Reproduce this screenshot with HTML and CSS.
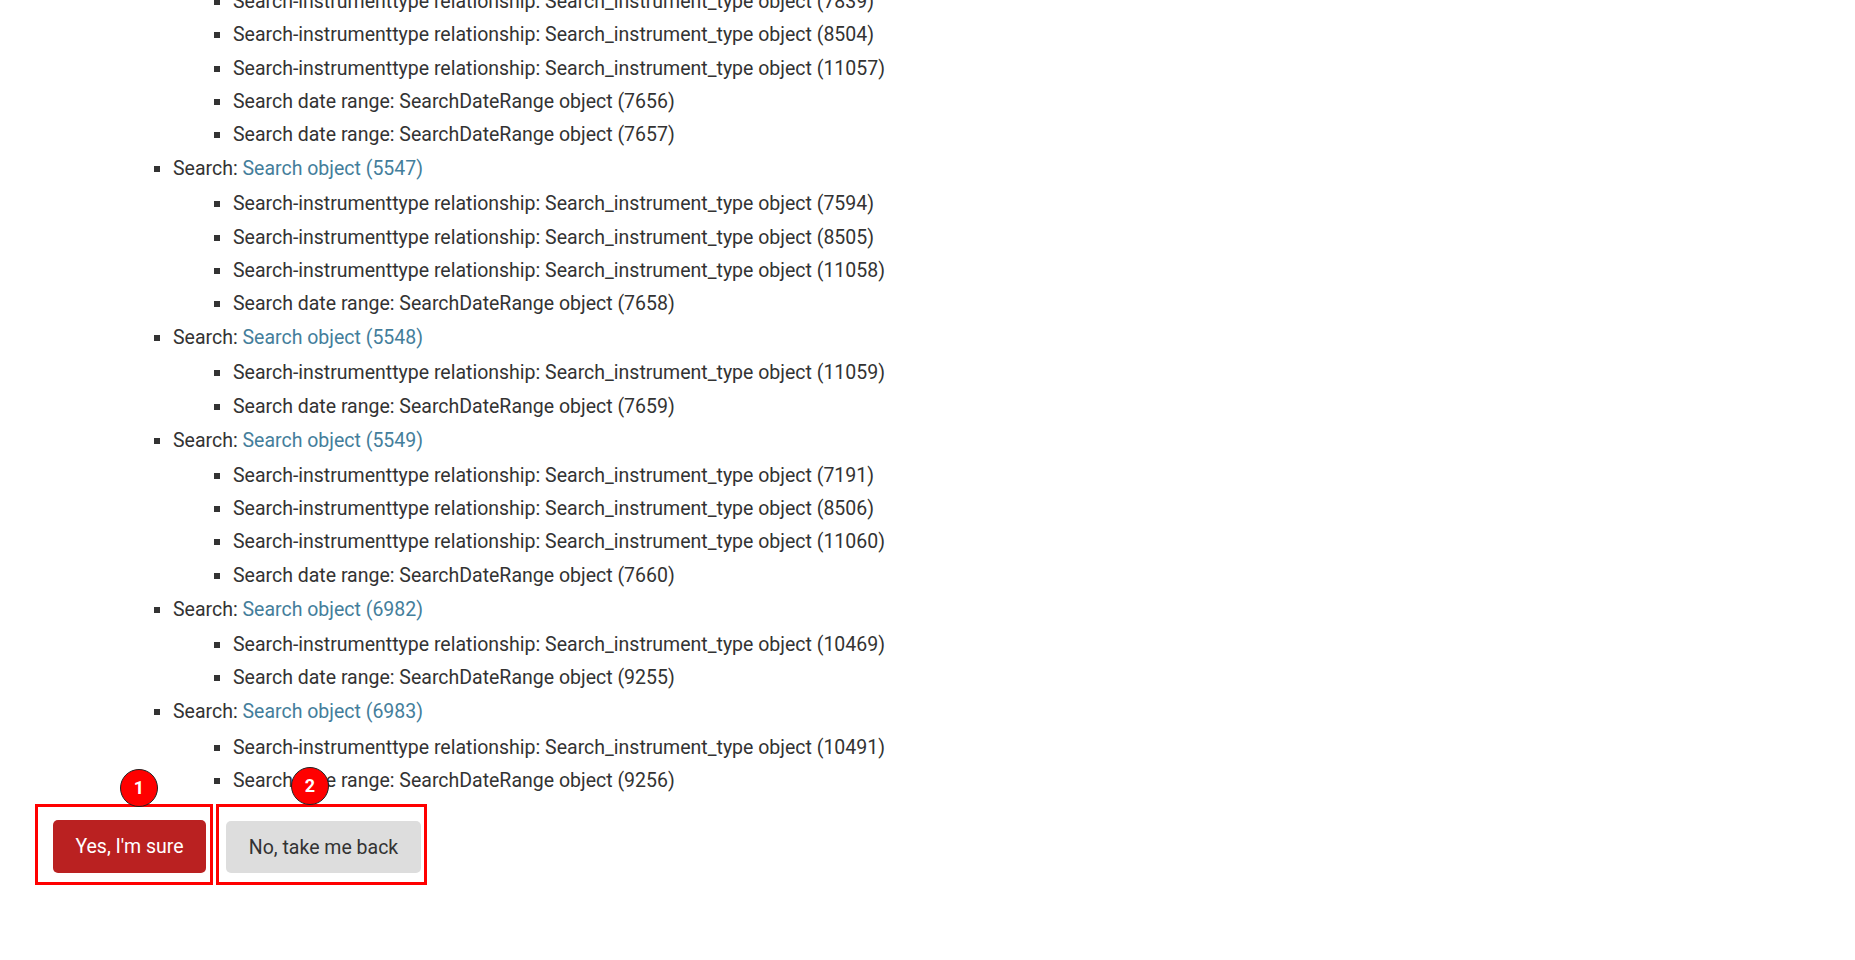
FILE: index.html
```html
<!DOCTYPE html>
<html lang="en">
<head>
<meta charset="utf-8">
<title>Delete confirmation</title>
<link rel="stylesheet" href="styles.css">
</head>
<body>
<div class="page">
  <ul class="objects">
    <li>Search: <a href="#">Search object (5546)</a>
      <ul>
        <li>Search-instrumenttype relationship: Search_instrument_type object (7839)</li>
        <li>Search-instrumenttype relationship: Search_instrument_type object (8504)</li>
        <li>Search-instrumenttype relationship: Search_instrument_type object (11057)</li>
        <li>Search date range: SearchDateRange object (7656)</li>
        <li>Search date range: SearchDateRange object (7657)</li>
      </ul>
    </li>
    <li>Search: <a href="#">Search object (5547)</a>
      <ul>
        <li>Search-instrumenttype relationship: Search_instrument_type object (7594)</li>
        <li>Search-instrumenttype relationship: Search_instrument_type object (8505)</li>
        <li>Search-instrumenttype relationship: Search_instrument_type object (11058)</li>
        <li>Search date range: SearchDateRange object (7658)</li>
      </ul>
    </li>
    <li>Search: <a href="#">Search object (5548)</a>
      <ul>
        <li>Search-instrumenttype relationship: Search_instrument_type object (11059)</li>
        <li>Search date range: SearchDateRange object (7659)</li>
      </ul>
    </li>
    <li>Search: <a href="#">Search object (5549)</a>
      <ul>
        <li>Search-instrumenttype relationship: Search_instrument_type object (7191)</li>
        <li>Search-instrumenttype relationship: Search_instrument_type object (8506)</li>
        <li>Search-instrumenttype relationship: Search_instrument_type object (11060)</li>
        <li>Search date range: SearchDateRange object (7660)</li>
      </ul>
    </li>
    <li>Search: <a href="#">Search object (6982)</a>
      <ul>
        <li>Search-instrumenttype relationship: Search_instrument_type object (10469)</li>
        <li>Search date range: SearchDateRange object (9255)</li>
      </ul>
    </li>
    <li>Search: <a href="#">Search object (6983)</a>
      <ul>
        <li>Search-instrumenttype relationship: Search_instrument_type object (10491)</li>
        <li>Search date range: SearchDateRange object (9256)</li>
      </ul>
    </li>
  </ul>

  <form class="actions">
    <button type="button" class="btn btn-danger">Yes, I'm sure</button>
    <button type="button" class="btn btn-cancel">No, take me back</button>
  </form>
</div>

<div class="callout callout-1"></div>
<div class="callout callout-2"></div>
<div class="badge badge-1">1</div>
<div class="badge badge-2">2</div>
</body>
</html>
```

FILE: styles.css
```css
html, body {
  margin: 0;
  padding: 0;
  background: #fff;
}

body {
  font-family: Roboto, "Liberation Sans", Arial, sans-serif;
  font-size: 19.5px;
  color: #333;
}

.page {
  margin-top: -50px;
}

.objects {
  list-style: none;
  margin: 0;
  padding: 0 0 0 154px;
}

.objects li {
  position: relative;
  padding: 1px 0 1px 19px;
  line-height: 31.2px;
}

.objects li::before {
  content: "";
  position: absolute;
  left: 0;
  top: 14px;
  width: 6px;
  height: 6px;
  background: #333;
}

.objects ul {
  list-style: none;
  margin: 3px 0 0 0;
  padding: 0 0 0 41px;
}

.objects a {
  color: #447e9b;
  text-decoration: none;
}

.actions {
  display: flex;
  gap: 20px;
  margin: 22px 0 0 53px;
}

.btn {
  font-family: Roboto, "Liberation Sans", Arial, sans-serif;
  font-size: 19.5px;
  height: 53px;
  padding: 0;
  border: none;
  border-radius: 5px;
  white-space: nowrap;
  cursor: pointer;
}

.btn-danger {
  background: #ba2121;
  color: #fff;
  width: 153px;
}

.btn-cancel {
  background: #dddddd;
  color: #333;
  width: 195px;
  height: 52px;
  margin-top: 1px;
}

/* annotation overlays */
.callout {
  position: absolute;
  top: 804px;
  height: 75px;
  border: 3px solid #ff0000;
}

.callout-1 {
  left: 35px;
  width: 172px;
}

.callout-2 {
  left: 216px;
  width: 205px;
}

.badge {
  position: absolute;
  width: 36px;
  height: 36px;
  border-radius: 50%;
  background: #ff0000;
  border: 1px solid #222;
  color: #fff;
  font-family: Roboto, "Liberation Sans", Arial, sans-serif;
  font-weight: 700;
  font-size: 18px;
  line-height: 36px;
  text-align: center;
}

.badge-1 {
  left: 120px;
  top: 769px;
}

.badge-2 {
  left: 291px;
  top: 767px;
}
```
